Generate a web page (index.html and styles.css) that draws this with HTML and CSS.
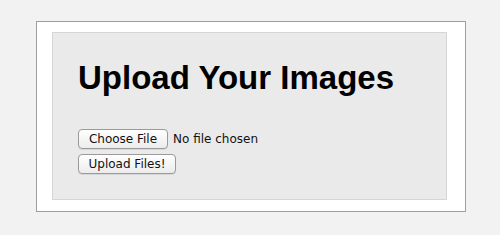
FILE: index.html
```html
<!DOCTYPE html>
<html>
<head>
<meta charset="utf-8">
<link rel="stylesheet" href="styles.css">
</head>
<body>
<div class="frame">
  <div class="panel">
    <h1 class="title">Upload Your Images</h1>
    <div class="row">
      <button class="btn btn-choose" type="button">Choose File</button>
      <span class="status">No file chosen</span>
    </div>
    <div class="row">
      <button class="btn btn-upload" type="button">Upload Files!</button>
    </div>
  </div>
</div>
</body>
</html>
```
FILE: styles.css
```css
html, body {
  margin: 0;
  padding: 0;
  background: #f2f2f2;
}
body {
  padding: 21px 0 0 36px;
  font-family: "DejaVu Sans", "Liberation Sans", sans-serif;
}
.frame {
  box-sizing: border-box;
  width: 430px;
  height: 191px;
  background: #ffffff;
  border: 1px solid #9e9e9e;
  padding: 10px 0 0 15px;
}
.panel {
  box-sizing: border-box;
  width: 395px;
  height: 168px;
  background: #eaeaea;
  border: 1px solid #d6d6d6;
  padding: 26px 0 0 25px;
}
.title {
  margin: 0 0 33px 0;
  font-family: "Liberation Sans", Arial, sans-serif;
  font-weight: bold;
  font-size: 33px;
  line-height: 37px;
  color: #000;
}
.row {
  display: flex;
  align-items: center;
  gap: 5px;
  margin-bottom: 5px;
}
.btn {
  box-sizing: border-box;
  height: 20px;
  padding: 0;
  font-family: "DejaVu Sans", sans-serif;
  font-size: 12px;
  color: #111;
  background: linear-gradient(#ffffff, #ececec);
  border: 1px solid #9a9a9a;
  border-radius: 4px;
  box-shadow: 0 1px 0 rgba(0,0,0,0.08);
}
.btn-choose { width: 90px; }
.btn-upload { width: 98px; }
.status {
  font-size: 12px;
  color: #111;
}
```
